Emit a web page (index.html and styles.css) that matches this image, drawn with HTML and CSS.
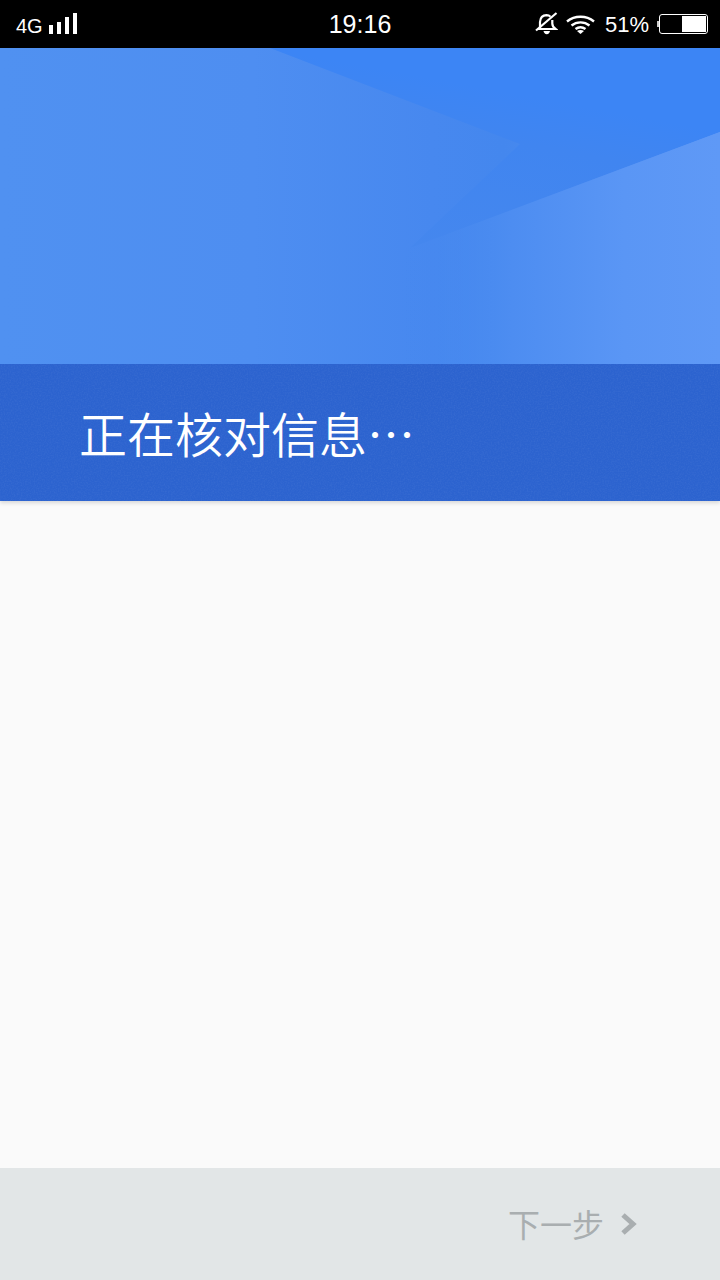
FILE: index.html
```html
<!DOCTYPE html>
<html lang="zh-CN">
<head>
  <meta charset="UTF-8" />
  <meta name="viewport" content="width=device-width, initial-scale=1" />
  <title>正在核对信息</title>
  <link rel="stylesheet" href="styles.css">
</head>
<body>

<div class="status-bar">
  <div class="status-left">
    <span class="network">4G</span>
    <svg class="signal" width="28" height="21" viewBox="0 0 28 21" aria-hidden="true">
      <rect x="0" y="12" width="4" height="9" />
      <rect x="8" y="9" width="4" height="12" />
      <rect x="16" y="4" width="4" height="17" />
      <rect x="24" y="0" width="4" height="21" />
    </svg>
  </div>
  <div class="clock">19:16</div>
  <div class="status-right">
    <!-- Glocke stumm -->
    <svg class="bell" width="24" height="24" viewBox="0 0 24 24" aria-hidden="true">
      <path d="M6 16.500V10C6.300 6 8.800 3.300 12.500 3.200c1.700 0 3 .5 4 1.500M18.300 8v3.500c0 2.300 1.200 4 3.200 5.500H3.500" fill="none" stroke="#fff" stroke-width="2.200" />
      <path d="M9.500 19h6.500c-.3 2-1.500 3.200-3.200 3.200S9.800 21 9.500 19z" fill="#fff" />
      <path d="M2 18.500L22.500 1" fill="none" stroke="#fff" stroke-width="2.200" />
    </svg>
    <svg class="wifi" width="29" height="19" viewBox="0 0 29 19" aria-hidden="true">
      <path d="M1 6.500C8.800 .2 20.200 .2 28 6.500M5.500 10.500c5.200-4.200 12.800-4.200 18 0M9.500 14c3-2.200 7-2.200 10 0" fill="none" stroke="#fff" stroke-width="2.400" />
      <path d="M11 16c2.200-1.200 4.800-1.200 7 0l-3.500 3z" fill="#fff" />
    </svg>
    <span class="percent">51%</span>
    <div class="battery">
      <div class="battery-nub"></div>
      <div class="battery-body">
        <div class="battery-level"></div>
      </div>
    </div>
  </div>
</div>

<header class="hero">
  <div class="hero-image">
    <svg class="hero-shapes" width="720" height="316" viewBox="0 0 720 316" aria-hidden="true">
      <defs>
        <linearGradient id="dark-fold" gradientUnits="userSpaceOnUse" x1="400" y1="24" x2="369" y2="192">
          <stop offset="0" stop-color="#3c85f5" />
          <stop offset="0.28" stop-color="#4085f0" />
          <stop offset="1" stop-color="#4587ee" />
        </linearGradient>
        <linearGradient id="light-fold" gradientUnits="userSpaceOnUse" x1="400" y1="0" x2="720" y2="0">
          <stop offset="0" stop-color="#4487ee" stop-opacity="0" />
          <stop offset="0.35" stop-color="#4d8df1" />
          <stop offset="0.7" stop-color="#5a96f5" />
          <stop offset="1" stop-color="#5f99f6" />
        </linearGradient>
      </defs>
      <polygon points="270,0 720,0 720,84 410,200 520,96" fill="url(#dark-fold)" />
      <polygon points="720,84 720,316 330,316 410,200" fill="url(#light-fold)" />
    </svg>
  </div>
  <div class="title-band">
    <svg class="band-noise" width="720" height="137" aria-hidden="true">
      <filter id="speckle">
        <feTurbulence type="fractalNoise" baseFrequency="0.7" numOctaves="2" />
        <feColorMatrix values="0 0 0 0 1  0 0 0 0 1  0 0 0 0 1  0 0 0 1.200 -0.450" />
      </filter>
      <rect width="720" height="137" filter="url(#speckle)" />
    </svg>
    <h1>正在核对信息…</h1>
  </div>
</header>

<main class="content"></main>

<footer class="action-bar">
  <a class="next-link">
    <span class="next-label">下一步</span>
    <svg class="chevron" width="17" height="24" viewBox="0 0 17 24" aria-hidden="true">
      <path d="M3 3l10 9-10 9" fill="none" stroke="#a9aeb0" stroke-width="5" />
    </svg>
  </a>
</footer>

</body>
</html>
```

FILE: styles.css
```css
* {
  box-sizing: border-box;
}
html, body {
  height: 100%;
}
body {
  margin: 0;
  display: flex;
  flex-direction: column;
  background: #fafafa;
  font-family: "Noto Sans CJK SC", "Noto Sans", sans-serif;
}

/* Statusleiste */
.status-bar {
  height: 48px;
  flex-shrink: 0;
  display: grid;
  grid-template-columns: 1fr auto 1fr;
  align-items: center;
  padding: 0 12px;
  background: #000;
  color: #fff;
  font-family: "Liberation Sans", Arial, sans-serif;
}
.status-left,
.status-right {
  display: flex;
  align-items: center;
}
.status-right {
  justify-content: flex-end;
}
.network {
  font-size: 20px;
  line-height: 24px;
  margin-top: 3px;
  margin-left: 4px;
  margin-right: 6px;
}
.signal {
  fill: #fff;
  margin-bottom: 1px;
}
.clock {
  font-size: 25px;
  line-height: 48px;
}
.bell {
  margin-right: 8px;
}
.wifi {
  margin-right: 10px;
}
.percent {
  font-size: 22px;
  line-height: 26px;
  margin-top: 2px;
  margin-right: 8px;
}
.battery {
  display: flex;
  align-items: center;
}
.battery-nub {
  width: 2px;
  height: 6px;
  background: #ccc;
}
.battery-body {
  width: 49px;
  height: 20px;
  display: flex;
  justify-content: flex-end;
  padding: 1px;
  border: 1px solid #fff;
  border-radius: 3px;
}
.battery-level {
  width: 24px;
  background: #fff;
}

/* Kopfbereich */
.hero {
  flex-shrink: 0;
  box-shadow: 0 2px 4px rgba(0, 0, 0, 0.14);
}
.hero-image {
  position: relative;
  height: 316px;
  background: linear-gradient(90deg, #5091f1 0%, #4e8ef1 35%, #4788ef 60%, #4487ee 70%, #5f99f6 100%);
}
.hero-shapes {
  position: absolute;
  top: 0;
  left: 0;
  display: block;
}
.title-band {
  position: relative;
  height: 137px;
  display: flex;
  align-items: center;
  padding-left: 79px;
  padding-bottom: 2px;
  background: #2c63cf;
}
.band-noise {
  position: absolute;
  top: 0;
  left: 0;
  opacity: 0.08;
}
.title-band h1 {
  position: relative;
  margin: 0;
  font-size: 48px;
  font-weight: 350;
  line-height: 1;
  color: #fff;
}

.content {
  flex: 1;
}

/* Untere Leiste */
.action-bar {
  height: 112px;
  flex-shrink: 0;
  display: flex;
  align-items: center;
  justify-content: flex-end;
  padding-right: 83px;
  background: #e2e6e7;
}
.next-link {
  display: flex;
  align-items: center;
  gap: 16px;
  font-size: 32px;
  line-height: 1;
  color: #a9aeb0;
}
.next-label {
  margin-top: -2px;
}
```
